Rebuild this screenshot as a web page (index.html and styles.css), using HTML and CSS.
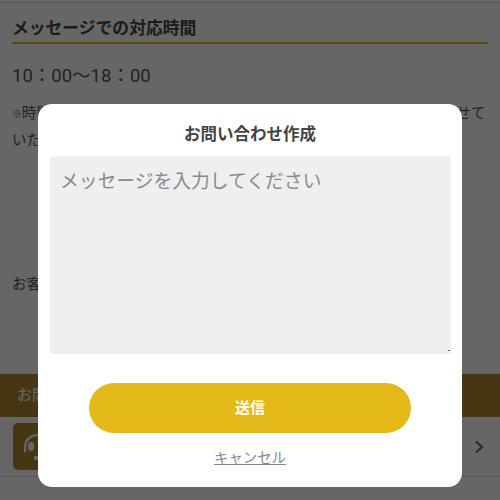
FILE: index.html
```html
<!DOCTYPE html>
<html lang="ja">
<head>
<meta charset="utf-8">
<title>お問い合わせ作成</title>
<link rel="stylesheet" href="styles.css">
</head>
<body>
<div class="page">
  <section class="hours">
    <h2 class="heading">メッセージでの対応時間</h2>
    <p class="time">10：00〜18：00</p>
    <p class="note"><span class="mark">※</span>時間外のお問い合わせにつきましては、翌営業日以降に順次回答させていただきます。</p>
    <p class="guest">お客様からのお問い合わせをお待ちしております。</p>
  </section>
  <div class="band">お問い合わせ</div>
  <div class="contact-row">
    <span class="contact-icon">
      <svg viewBox="0 0 32 32" width="32" height="32" fill="none" stroke="#fff" stroke-width="2.2">
        <path d="M4.100 21v-5a11.900 11.900 0 0 1 23.800 0v5"/>
        <rect x="7" y="11" width="6" height="9" rx="3" fill="#fff" stroke="none"/>
        <rect x="19" y="11" width="6" height="9" rx="3" fill="#fff" stroke="none"/>
        <path d="M27 20c0 4-3 7-10 7" stroke-width="1.500"/>
        <circle cx="15" cy="27" r="2.200" fill="#fff" stroke="none"/>
      </svg>
    </span>
    <span class="contact-label">メッセージで問い合わせる</span>
    <svg class="chevron" viewBox="0 0 10 14" width="10" height="14" fill="none" stroke="#666" stroke-width="2"><path d="M2 1.500 8 7l-6 5.500"/></svg>
  </div>
</div>
<div class="overlay"></div>
<form class="modal">
  <h3 class="modal-title">お問い合わせ作成</h3>
  <textarea class="message" placeholder="メッセージを入力してください"></textarea>
  <button class="send" type="button">送信</button>
  <a class="cancel" href="#">キャンセル</a>
</form>
</body>
</html>
```
FILE: styles.css
```css
* { box-sizing: border-box; }
html, body { margin: 0; height: 100%; overflow: hidden; }
body {
  background: #fff;
  color: #555;
  font-family: Roboto, "Noto Sans CJK JP", sans-serif;
}
.page { height: 500px; padding-top: 2px; display: flex; flex-direction: column; }
.hours { padding: 13px 12px 0; height: 372px; border-top: 1px solid #ddd; flex: none; }
.heading {
  margin: 0;
  height: 28px;
  font-size: 16.8px;
  line-height: 24px;
  font-weight: 700;
  color: #444;
  border-bottom: 2px solid #e3b919;
}
.time { margin: 19px 0 0; font-size: 18.5px; line-height: 26px; }
.note { margin: 12px 0 0; font-size: 14.5px; line-height: 26px; }
.mark { font-size: 10px; }
.guest { margin: 118px 0 0; font-size: 14.5px; line-height: 26px; }
.band {
  height: 43px;
  flex: none;
  padding: 0 17px;
  background: #b0882d;
  color: #fff;
  font-size: 15px;
  line-height: 42px;
}
.contact-row {
  height: 60px;
  flex: none;
  padding: 6px 16px 6px 13px;
  display: flex;
  align-items: flex-start;
  border-bottom: 1px solid #ddd;
}
.contact-icon {
  width: 48px;
  height: 47px;
  border-radius: 5px;
  background: #b0882d;
  display: flex;
  align-items: center;
  justify-content: center;
}
.contact-label { margin-left: 12px; font-size: 14px; line-height: 47px; flex: 1; }
.chevron { margin-top: 17px; }
.overlay { position: fixed; inset: 0; background: rgba(0, 0, 0, .6); }
.modal {
  position: fixed;
  left: 38px;
  top: 104px;
  width: 424px;
  height: 383px;
  padding-top: 19px;
  background: #fff;
  border-radius: 14px;
  display: flex;
  flex-direction: column;
  align-items: center;
}
.modal-title {
  margin: 0;
  height: 33px;
  font-size: 16.5px;
  line-height: 24px;
  font-weight: 700;
  color: #444;
}
.message {
  display: block;
  align-self: flex-start;
  margin-left: 12px;
  width: 401px;
  height: 198px;
  padding: 13px 10px;
  border: 0;
  border-radius: 4px;
  background: #efefef;
  font: 18.8px/26px Roboto, "Noto Sans CJK JP", sans-serif;
  color: #333;
}
.message::placeholder { color: #8a8a8a; opacity: 1; }
.message::-webkit-resizer {
  background: linear-gradient(#666, #666) 12px 11px / 2px 1px no-repeat;
}
.send {
  margin-top: 29px;
  width: 322px;
  height: 50px;
  border: 0;
  border-radius: 25px;
  background: #e3b919;
  color: #fff;
  font: 700 15px/48px Roboto, "Noto Sans CJK JP", sans-serif;
}
.cancel {
  margin-top: 16px;
  font-size: 14.4px;
  line-height: 20px;
  color: #888;
  text-decoration: underline;
}
```
